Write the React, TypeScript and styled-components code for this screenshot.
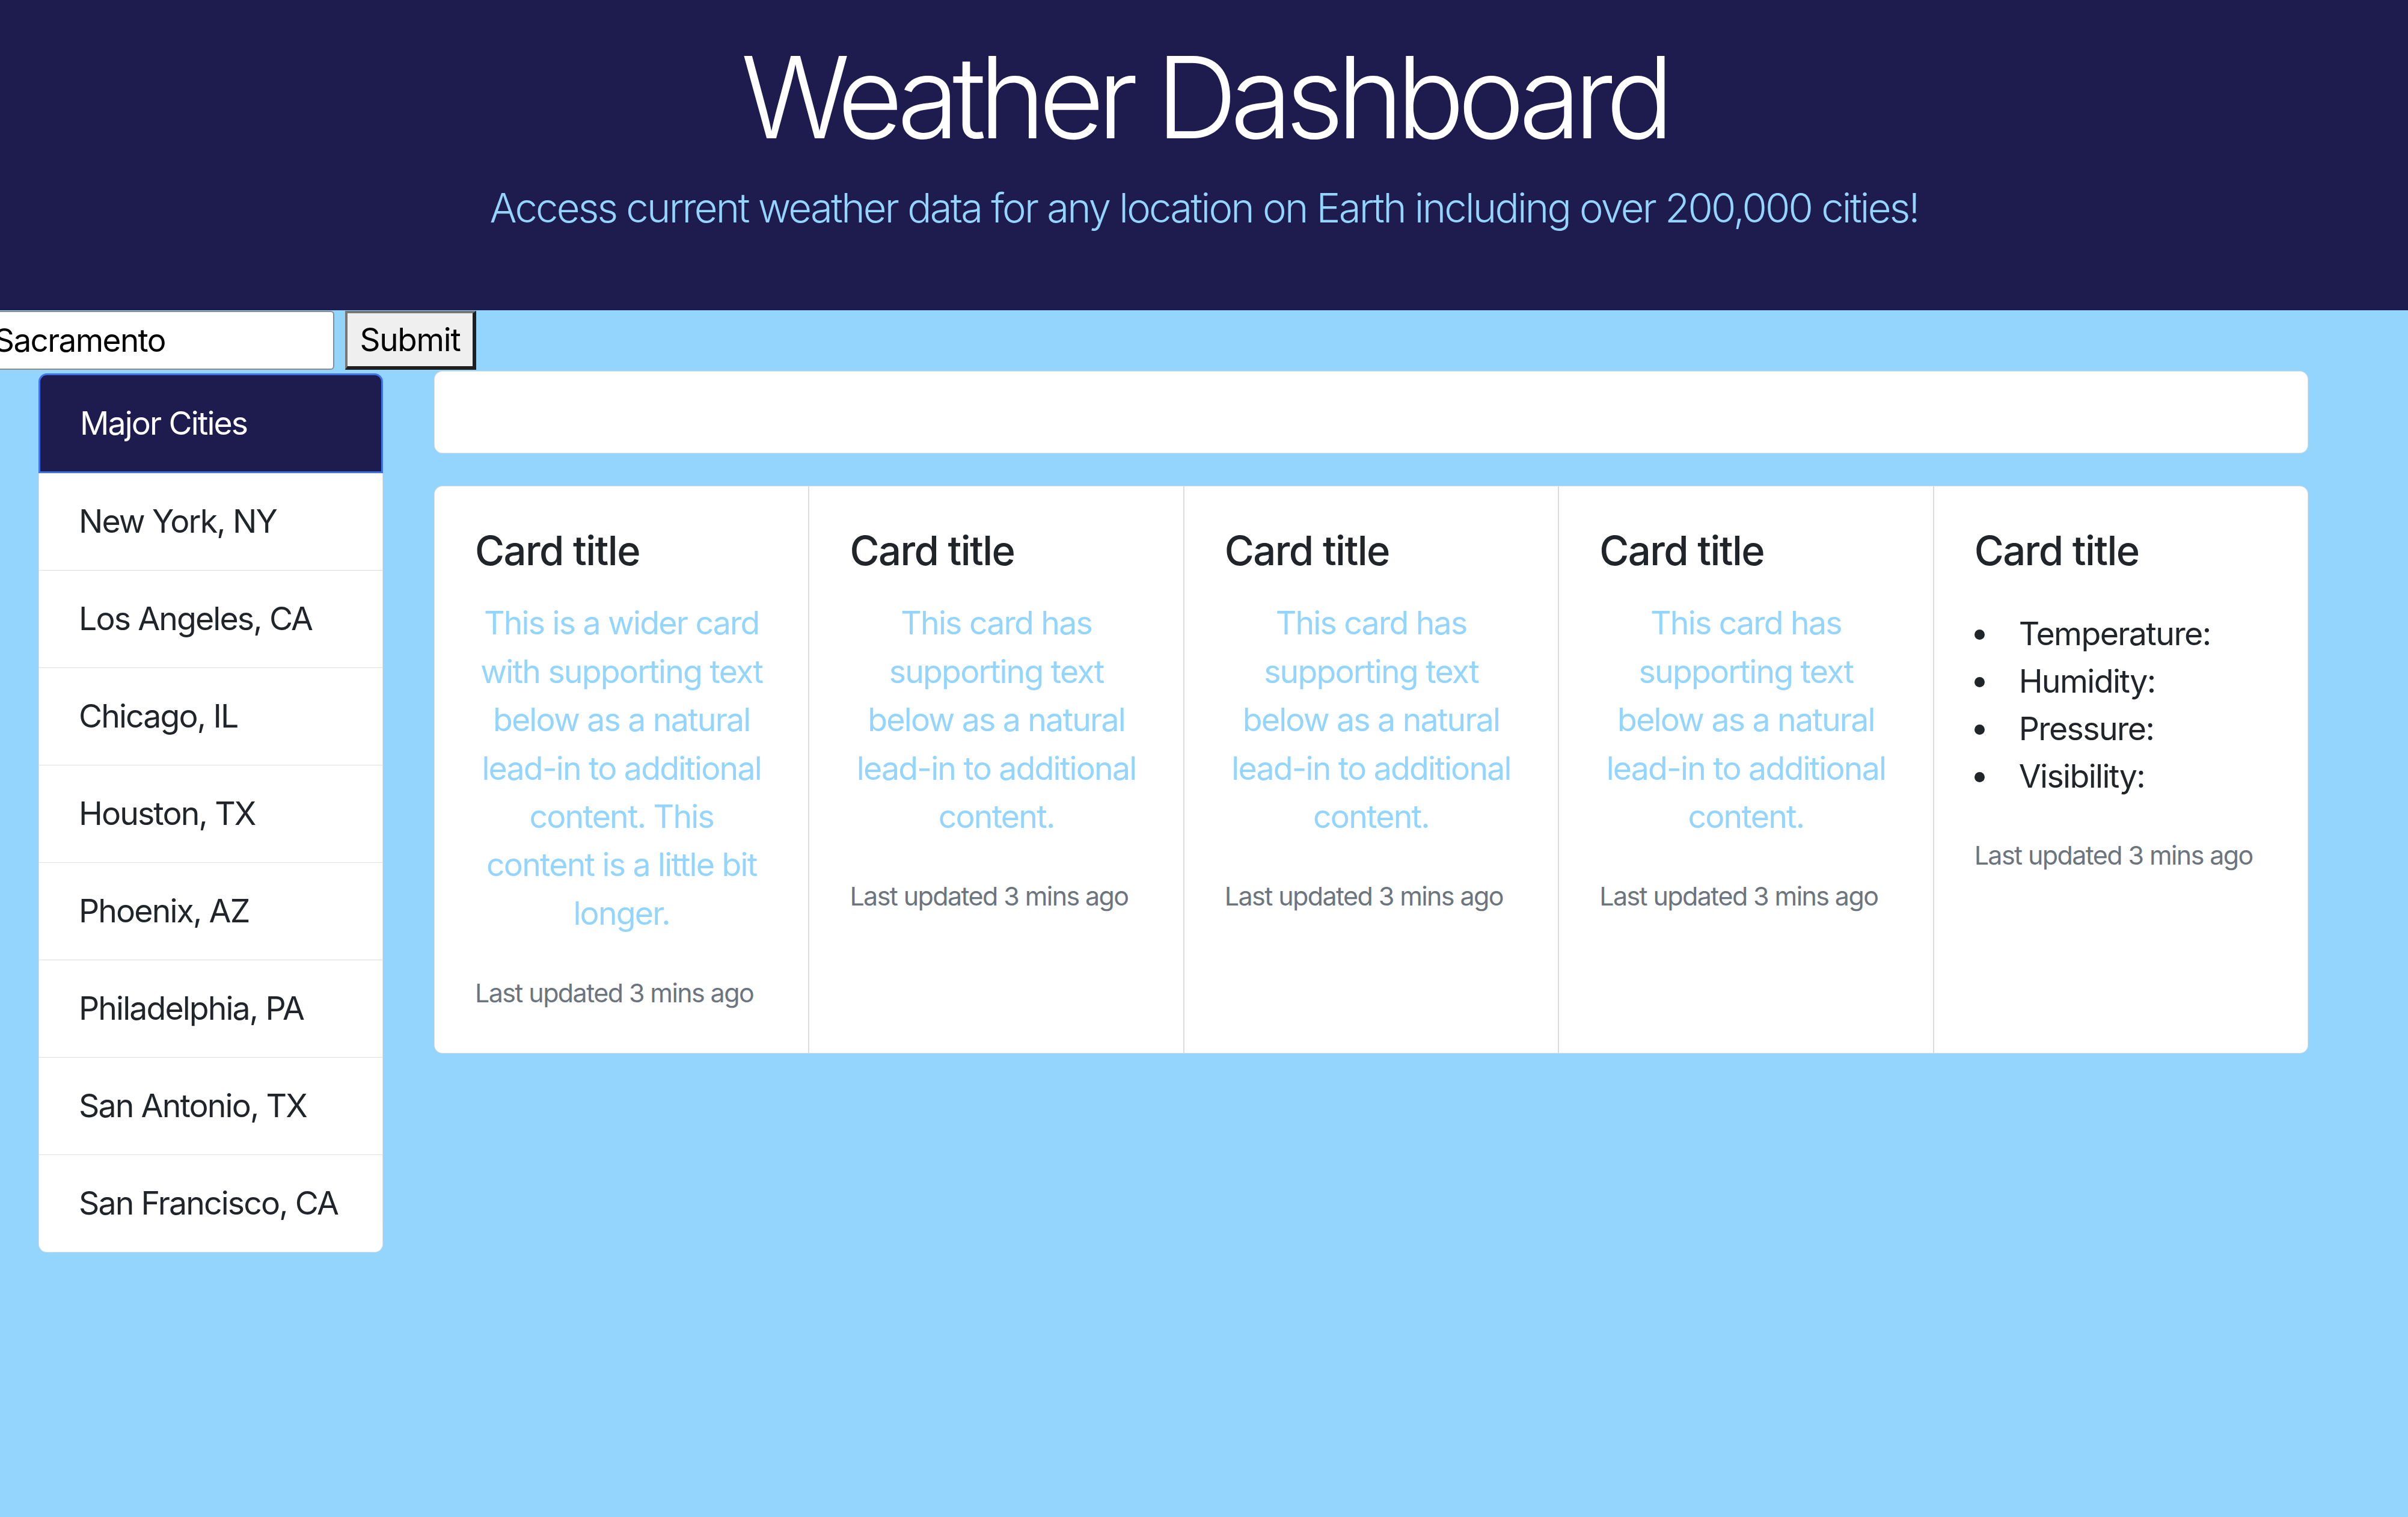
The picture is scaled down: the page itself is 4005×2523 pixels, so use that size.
import React from 'react';
import styled, { createGlobalStyle } from 'styled-components';

const navy = '#1e1c4f';
const sky = '#93d5fd';
const ink = '#212529';

const GlobalStyle = createGlobalStyle`
  html, body {
    margin: 0;
    padding: 0;
    background: ${sky};
    font-family: Inter, "Noto Sans", "Liberation Sans", sans-serif;
    color: ${ink};
  }
  * {
    box-sizing: border-box;
  }
`;

const Page = styled.div`
  width: 4005px;
  min-height: 2523px;
  background: ${sky};
  overflow: hidden;
`;

const Header = styled.header`
  height: 516px;
  background: ${navy};
  padding-top: 49px;
  text-align: center;
`;

const Title = styled.h1`
  margin: 0;
  font-size: 188px;
  font-weight: 300;
  line-height: 1.2;
  color: #fff;
  letter-spacing: -11.5px;
`;

const Lead = styled.p`
  margin: 21px 0 0;
  font-size: 67px;
  font-weight: 300;
  line-height: 1.5;
  color: ${sky};
  letter-spacing: -2.8px;
`;

const SearchForm = styled.form`
  display: flex;
  align-items: stretch;
  height: 98px;
  margin-top: 1px;
`;

const CityInput = styled.input`
  width: 572px;
  margin-left: -16px;
  padding: 0 4px;
  border: 2px solid #8a8a8a;
  border-radius: 6px;
  background: #fff;
  font-family: Inter, "Liberation Sans", sans-serif;
  font-size: 53px;
  letter-spacing: -1.6px;
  color: #000;
  outline: none;
`;

const SubmitButton = styled.button`
  width: 218px;
  margin-left: 18px;
  padding: 0 14px;
  background: #efefef;
  border-style: solid;
  border-width: 4px 6px 6px 4px;
  border-color: #767676 #1f1f1f #1f1f1f #767676;
  font-family: Inter, "Liberation Sans", sans-serif;
  font-size: 53px;
  letter-spacing: -1.2px;
  color: #000;
`;

const Body = styled.div`
  display: flex;
  align-items: flex-start;
  margin-top: 2px;
`;

const Sidebar = styled.ul`
  width: 573px;
  margin: 4px 0 0 64px;
  padding: 0;
  list-style: none;
  font-size: 53.6px;
  line-height: 1.5;
  letter-spacing: -1.9px;
  white-space: nowrap;
`;

const CityItem = styled.li<{ active?: boolean }>`
  padding: 0 66px;
  height: ${({ active }) => (active ? '166px' : '162px')};
  display: flex;
  align-items: center;
  background: ${({ active }) => (active ? navy : '#fff')};
  color: ${({ active }) => (active ? '#fff' : ink)};
  border: ${({ active }) => (active ? '3px solid #3f73ee' : '1px solid rgba(0,0,0,.125)')};
  border-top: ${({ active }) => (active ? '3px solid #3f73ee' : 'none')};
  &:first-child {
    border-radius: 14px 14px 0 0;
  }
  &:last-child {
    border-radius: 0 0 14px 14px;
  }
`;

const Main = styled.main`
  width: 3117px;
  margin-left: 85px;
`;

const EmptyCard = styled.div`
  height: 137px;
  background: #fff;
  border: 1px solid rgba(0, 0, 0, 0.125);
  border-radius: 14px;
  margin-bottom: 54px;
`;

const CardGroup = styled.div`
  display: flex;
  height: 944px;
  background: #fff;
  border: 1px solid rgba(0, 0, 0, 0.125);
  border-radius: 14px;
  overflow: hidden;
`;

const Card = styled.div`
  flex: 1;
  padding: 67px;
  & + & {
    border-left: 2px solid #dcdcdc;
  }
`;

const CardTitle = styled.h5`
  margin: 0 0 40px;
  font-size: 67px;
  font-weight: 500;
  line-height: 1.2;
  color: ${ink};
  letter-spacing: -1.6px;
`;

const CardText = styled.p`
  margin: 0 0 53.6px;
  font-size: 53.6px;
  line-height: 1.5;
  text-align: center;
  color: ${sky};
  letter-spacing: -1.8px;
`;

const Updated = styled.p`
  margin: 0;
  font-size: 43px;
  line-height: 1.8;
  color: #6c757d;
  letter-spacing: -1.6px;
  white-space: nowrap;
`;

const Stats = styled.ul`
  margin: 58px 0 53.6px;
  padding-left: 0;
  list-style: none;
  font-size: 53.6px;
  line-height: 79px;
  color: ${ink};
  letter-spacing: -1.6px;

  & > li::before {
    content: '';
    display: inline-block;
    width: 17px;
    height: 17px;
    margin-right: 57px;
    border-radius: 50%;
    background: ${ink};
    vertical-align: 9px;
  }
`;

const cities = [
  'New York, NY',
  'Los Angeles, CA',
  'Chicago, IL',
  'Houston, TX',
  'Phoenix, AZ',
  'Philadelphia, PA',
  'San Antonio, TX',
  'San Francisco, CA',
];

const blurb =
  'This card has supporting text below as a natural lead-in to additional content.';

export default function App() {
  return (
    <Page>
      <GlobalStyle />
      <Header>
        <Title>Weather Dashboard</Title>
        <Lead>Access current weather data for any location on Earth including over 200,000 cities!</Lead>
      </Header>
      <SearchForm onSubmit={(e) => e.preventDefault()}>
        <CityInput defaultValue="Sacramento" />
        <SubmitButton type="submit">Submit</SubmitButton>
      </SearchForm>
      <Body>
        <Sidebar>
          <CityItem active>Major Cities</CityItem>
          {cities.map((c) => (
            <CityItem key={c}>{c}</CityItem>
          ))}
        </Sidebar>
        <Main>
          <EmptyCard />
          <CardGroup>
            <Card>
              <CardTitle>Card title</CardTitle>
              <CardText>
                This is a wider card with supporting text below as a natural lead-in to additional content. This
                content is a little bit longer.
              </CardText>
              <Updated>Last updated 3 mins ago</Updated>
            </Card>
            {[0, 1, 2].map((i) => (
              <Card key={i}>
                <CardTitle>Card title</CardTitle>
                <CardText>{blurb}</CardText>
                <Updated>Last updated 3 mins ago</Updated>
              </Card>
            ))}
            <Card>
              <CardTitle>Card title</CardTitle>
              <Stats>
                <li>Temperature:</li>
                <li>Humidity:</li>
                <li>Pressure:</li>
                <li>Visibility:</li>
              </Stats>
              <Updated>Last updated 3 mins ago</Updated>
            </Card>
          </CardGroup>
        </Main>
      </Body>
    </Page>
  );
}
